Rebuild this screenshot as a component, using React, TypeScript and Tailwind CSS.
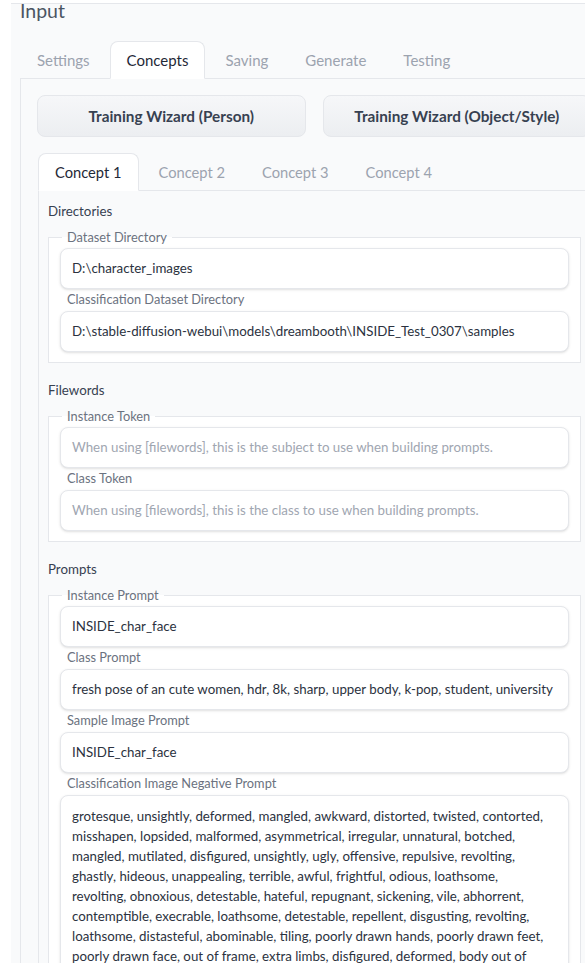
import React from "react";

const font = { fontFamily: "Lato, 'Noto Sans', sans-serif" };

const negativeLines = [
  "grotesque, unsightly, deformed, mangled, awkward, distorted, twisted, contorted,",
  "misshapen, lopsided, malformed, asymmetrical, irregular, unnatural, botched,",
  "mangled, mutilated, disfigured, unsightly, ugly, offensive, repulsive, revolting,",
  "ghastly, hideous, unappealing, terrible, awful, frightful, odious, loathsome,",
  "revolting, obnoxious, detestable, hateful, repugnant, sickening, vile, abhorrent,",
  "contemptible, execrable, loathsome, detestable, repellent, disgusting, revolting,",
  "loathsome, distasteful, abominable, tiling, poorly drawn hands, poorly drawn feet,",
  "poorly drawn face, out of frame, extra limbs, disfigured, deformed, body out of",
];

function Tab({ label, active, small }: { label: string; active?: boolean; small?: boolean }) {
  return (
    <div
      className={
        "-mb-px flex h-[38px] items-center rounded-t-lg border px-4 " +
        (small ? "text-[14.7px] " : "text-[15px] ") +
        (active
          ? "border-[#e5e7eb] border-b-white bg-white text-[#1f2937]"
          : "border-transparent text-[#9ca3af]")
      }
    >
      {label}
    </div>
  );
}

function Field({ value, placeholder }: { value?: string; placeholder?: string }) {
  return (
    <div className="flex h-[41px] min-w-0 items-center overflow-hidden rounded-lg border border-[#e5e7eb] bg-white px-[11px] text-[13.3px] shadow-sm">
      {value ? (
        <span className="whitespace-nowrap text-[#2b3240]">{value}</span>
      ) : (
        <span className="whitespace-nowrap text-[#a0a6b1]">{placeholder}</span>
      )}
    </div>
  );
}

function Label({ children }: { children: React.ReactNode }) {
  return (
    <div className="flex h-[22px] items-center pl-[7px] text-[12.8px] text-[#6b7280]">
      {children}
    </div>
  );
}

type Item = { label: string; value?: string; placeholder?: string };

function Group({ items, children }: { items: Item[]; children?: React.ReactNode }) {
  const [first, ...rest] = items;
  return (
    <fieldset className="min-w-0 border border-[#e5e7eb] bg-white px-[11px] pb-[10px]">
      <legend className="ml-[2px] px-[5px] text-[12.8px] leading-[17px] text-[#6b7280]">
        {first.label}
      </legend>
      <div className="pt-[2px]">
        <Field value={first.value} placeholder={first.placeholder} />
        {rest.map((it) => (
          <div key={it.label}>
            <Label>{it.label}</Label>
            <Field value={it.value} placeholder={it.placeholder} />
          </div>
        ))}
        {children}
      </div>
    </fieldset>
  );
}

function Section({ title, children }: { title: string; children: React.ReactNode }) {
  return (
    <div>
      <div className="mb-[8px] h-[20px] text-[13.3px] leading-[20px] text-[#374151]">{title}</div>
      {children}
    </div>
  );
}

export default function App() {
  return (
    <div className="h-[963px] w-full overflow-hidden bg-white" style={font}>
      <div className="ml-[11px] mt-[3px] w-[620px] border-t border-[#e5e7eb] bg-[#f9fafb] pl-[9px] pb-10">
        <div className="-mt-[5px] h-[42px] text-[19.5px] leading-[24px] text-[#4b5563]">Input</div>

        <div className="flex gap-[3px]">
          <Tab label="Settings" />
          <Tab label="Concepts" active />
          <Tab label="Saving" />
          <Tab label="Generate" />
          <Tab label="Testing" />
        </div>

        <div className="w-[588px] border border-[#e5e7eb] bg-[#f9fafb] p-4">
          <div className="grid grid-cols-2 gap-[17px]">
            <button className="h-[42px] rounded-lg border border-[#e5e7eb] bg-gradient-to-b from-[#f6f7f9] to-[#eceef1] text-[15.3px] font-bold text-[#374151]">
              Training Wizard (Person)
            </button>
            <button className="h-[42px] rounded-lg border border-[#e5e7eb] bg-gradient-to-b from-[#f6f7f9] to-[#eceef1] text-[15.3px] font-bold text-[#374151]">
              Training Wizard (Object/Style)
            </button>
          </div>

          <div className="ml-px mt-4 flex gap-[3px]">
            <Tab label="Concept 1" active small />
            <Tab label="Concept 2" small />
            <Tab label="Concept 3" small />
            <Tab label="Concept 4" small />
          </div>

          <div className="ml-px flex flex-col gap-[17px] border border-[#e5e7eb] bg-[#f9fafb] px-[9px] pt-[10px] pb-4">
            <Section title="Directories">
              <Group
                items={[
                  { label: "Dataset Directory", value: "D:\\character_images" },
                  {
                    label: "Classification Dataset Directory",
                    value: "D:\\stable-diffusion-webui\\models\\dreambooth\\INSIDE_Test_0307\\samples",
                  },
                ]}
              />
            </Section>

            <Section title="Filewords">
              <Group
                items={[
                  {
                    label: "Instance Token",
                    placeholder: "When using [filewords], this is the subject to use when building prompts.",
                  },
                  {
                    label: "Class Token",
                    placeholder: "When using [filewords], this is the class to use when building prompts.",
                  },
                ]}
              />
            </Section>

            <Section title="Prompts">
              <Group
                items={[
                  { label: "Instance Prompt", value: "INSIDE_char_face" },
                  {
                    label: "Class Prompt",
                    value: "fresh pose of an cute women, hdr, 8k, sharp, upper body, k-pop, student, university",
                  },
                  { label: "Sample Image Prompt", value: "INSIDE_char_face" },
                ]}
              >
                <Label>Classification Image Negative Prompt</Label>
                <div className="h-[200px] overflow-hidden rounded-lg border border-[#e5e7eb] bg-white px-[11px] py-[10px] text-[13.3px] leading-[20px] text-[#2b3240] shadow-sm">
                  {negativeLines.map((l, i) => (
                    <div key={i} className="whitespace-nowrap">
                      {l}
                    </div>
                  ))}
                </div>
              </Group>
            </Section>
          </div>
        </div>
      </div>
    </div>
  );
}
